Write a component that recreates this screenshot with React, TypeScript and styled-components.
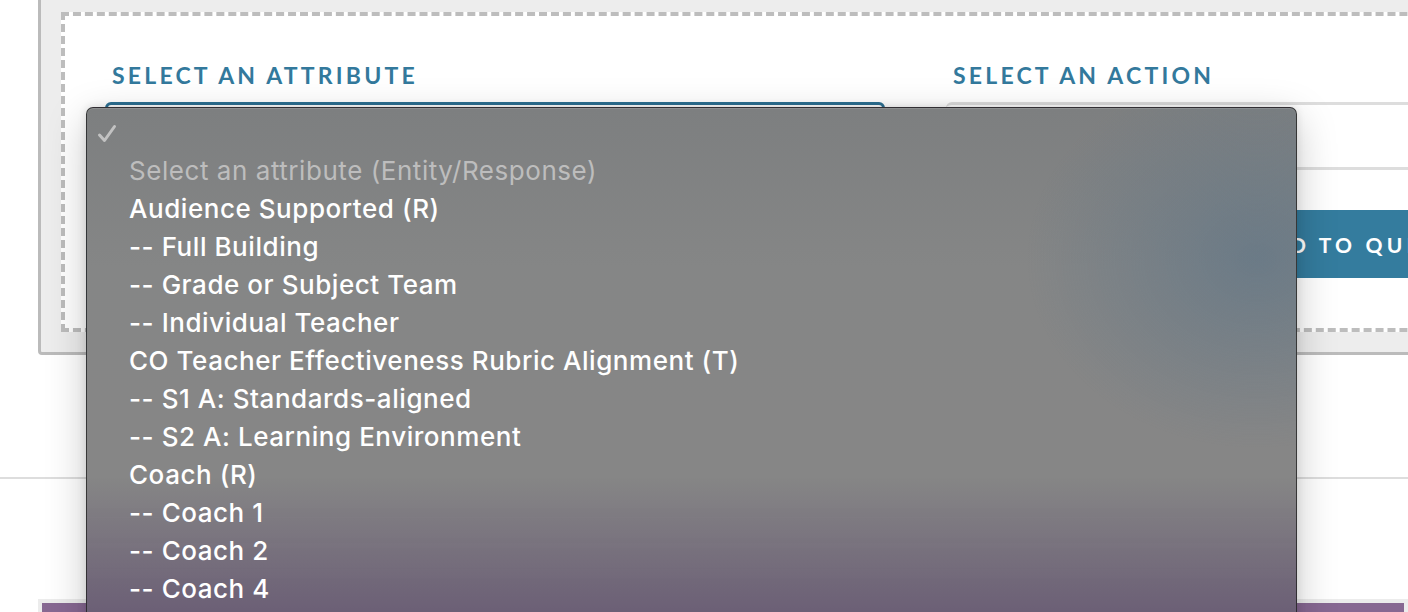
import React from "react";
import styled, { createGlobalStyle } from "styled-components";

const GlobalStyle = createGlobalStyle`
  html, body { margin: 0; padding: 0; background: #ffffff; overflow: hidden; }
  #root { width: 1408px; height: 612px; }
`;

const Page = styled.div`
  position: relative;
  width: 1408px;
  height: 612px;
  overflow: hidden;
  background: #fff;
`;

const Panel = styled.section`
  margin: -11px 0 0 38px;
  width: 1500px;
  box-sizing: border-box;
  background: #ededed;
  border: 3px solid #bbbbbb;
  border-radius: 4px;
  padding: 20px;
`;

const DashedBox = styled.div`
  box-sizing: border-box;
  height: 320px;
  background: #fff;
  border: 4px dashed #bdbdbd;
  padding: 46px 0 0 40px;
  display: grid;
  grid-template-columns: 780px 700px;
  column-gap: 61px;
`;

const Column = styled.div`
  display: flex;
  flex-direction: column;
`;

const Label = styled.div`
  font-family: "Lato", "Open Sans", sans-serif;
  font-weight: 700;
  font-size: 23px;
  line-height: 26px;
  letter-spacing: 3.2px;
  color: #33799c;
  padding-left: 7px;
  margin-bottom: 14px;
`;

const SelectBox = styled.div<{ $active?: boolean }>`
  box-sizing: border-box;
  height: 68px;
  border-radius: 6px;
  background: #fff;
  border: 3px solid ${(p) => (p.$active ? "#2d7093" : "#dddddd")};
  border-left-width: ${(p) => (p.$active ? "3px" : "0")};
  border-right-width: ${(p) => (p.$active ? "3px" : "0")};
`;

const QueueButton = styled.div`
  margin: 40px 0 0 0;
  height: 68px;
  box-sizing: border-box;
  background: #347c9e;
  display: flex;
  align-items: center;
  padding-left: 305px;
  font-family: "Lato", "Open Sans", sans-serif;
  font-weight: 700;
  font-size: 21px;
  letter-spacing: 4.2px;
  color: #fff;
`;

const Rule = styled.hr`
  margin: 122px 0 0 0;
  border: 0;
  height: 2px;
  background: #dddddd;
`;

const BottomPanel = styled.div`
  margin: 120px 0 0 38px;
  height: 60px;
  border: 4px solid #ececec;
  background: #876892;
`;

const Menu = styled.div`
  position: absolute;
  left: 86px;
  top: 107px;
  width: 1211px;
  height: 560px;
  box-sizing: border-box;
  border-radius: 7px;
  border: 1px solid rgba(30, 30, 30, 0.75);
  box-shadow: 0 12px 40px rgba(0, 0, 0, 0.22), 0 0 8px rgba(0, 0, 0, 0.12),
    inset 0 1px 0 rgba(255, 255, 255, 0.12);
  background:
    radial-gradient(ellipse 230px 190px at 1170px 150px, rgba(90, 115, 135, 0.6), rgba(90, 115, 135, 0) 100%),
    linear-gradient(to bottom, rgba(108, 96, 118, 0) 370px, rgba(108, 96, 118, 1) 500px),
    linear-gradient(to bottom, #7d7f80 0px, #858686 160px, #868686 300px);
  padding: 6px 0 0 0;
  font-family: "Inter", "Noto Sans", sans-serif;
  font-size: 26px;
  letter-spacing: 0.55px;
`;

const Row = styled.div<{ $muted?: boolean }>`
  position: relative;
  height: 38px;
  line-height: 38px;
  padding-left: 42px;
  white-space: nowrap;
  color: ${(p) => (p.$muted ? "#bdbdbd" : "#ffffff")};
  font-weight: ${(p) => (p.$muted ? 400 : 500)};
`;

const Check = styled.svg`
  position: absolute;
  left: 10px;
  top: 10px;
  width: 20px;
  height: 19px;
`;

const items = [
  "Audience Supported (R)",
  "-- Full Building",
  "-- Grade or Subject Team",
  "-- Individual Teacher",
  "CO Teacher Effectiveness Rubric Alignment (T)",
  "-- S1 A: Standards-aligned",
  "-- S2 A: Learning Environment",
  "Coach (R)",
  "-- Coach 1",
  "-- Coach 2",
  "-- Coach 4",
  "-- Coach 5",
];

export default function App() {
  return (
    <Page>
      <GlobalStyle />
      <Panel>
        <DashedBox>
          <Column>
            <Label>SELECT AN ATTRIBUTE</Label>
            <SelectBox $active />
          </Column>
          <Column>
            <Label>SELECT AN ACTION</Label>
            <SelectBox />
            <QueueButton>ADD TO QUEUE</QueueButton>
          </Column>
        </DashedBox>
      </Panel>
      <Rule />
      <BottomPanel />
      <Menu>
        <Row>
          <Check viewBox="0 0 20 19">
            <polyline points="2.5,11 7.5,16.5 17.5,2.5" fill="none" stroke="#c2c2c2" strokeWidth="3" strokeLinecap="round" strokeLinejoin="round" />
          </Check>
        </Row>
        <Row $muted>Select an attribute (Entity/Response)</Row>
        {items.map((t) => (
          <Row key={t}>{t}</Row>
        ))}
      </Menu>
    </Page>
  );
}
